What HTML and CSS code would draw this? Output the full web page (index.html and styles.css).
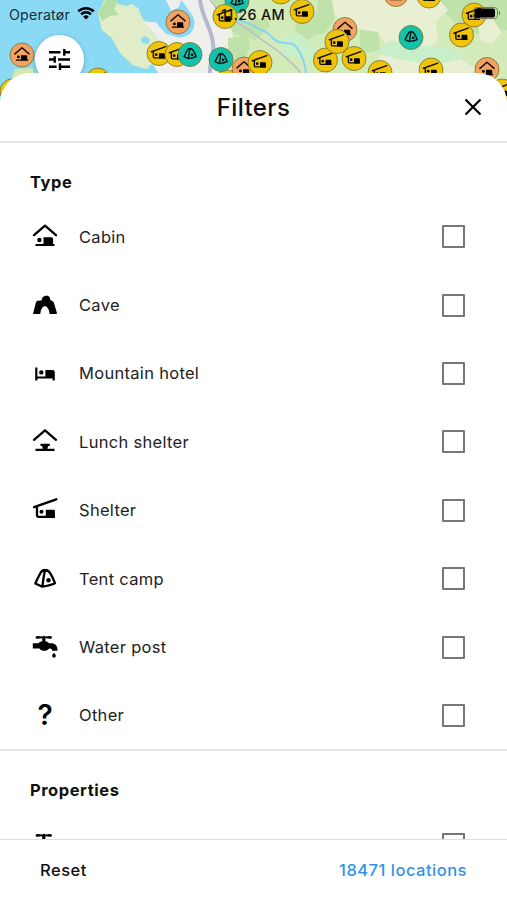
FILE: index.html
```
<!DOCTYPE html>
<html lang="en">
<head>
<meta charset="utf-8">
<title>Filters</title>
<link rel="stylesheet" href="styles.css">
</head>
<body>
<svg class="sprite" aria-hidden="true">
  <symbol id="cabin" viewBox="0 0 28 28"><path class="line" d="M3 12.2 14 2.7 25 12.2"/><circle cx="8.4" cy="17" r="2.2"/><path d="M12.5 14.3h8a1.6 1.6 0 0 1 1.6 1.6V21h1.4v2.1h-19V21h8z"/></symbol>
  <symbol id="cave" viewBox="0 0 28 28"><path d="M2 22.8 5 11.200l1.200-1.500 4.200-.2 1.200-3.200L14 4.800h2.800l1.800 1.200.9 3 3.200 2L26 22.200l-.6.8h-6.700l-.9-4-1.800-3-2.200-.9-2 1-1.800 3L9.200 23H2.600z"/></symbol>
  <symbol id="hotel" viewBox="0 0 28 28"><path d="M4.200 8.500h2.200v9h8v-6.600h7a2.400 2.400 0 0 1 2.400 2.400v8.200h-2.200v-1.900H6.400v1.900H4.200z"/><circle cx="10.3" cy="13.4" r="2.2"/></symbol>
  <symbol id="lunch" viewBox="0 0 28 28"><path class="line" d="M3 11.8 14 2.3 25 11.8"/><path d="M9.500 15.700h9.300v2.300h-1.600l-.8 2.700h7.100v2.200h-19v-2.200h7.400l-.8-2.700H9.500z"/></symbol>
  <symbol id="shelter" viewBox="0 0 28 28"><path class="line" d="M3 11.200 25.300 3.300M6 11v8.200a1.600 1.600 0 0 0 1.600 1.600H23"/><circle cx="10.5" cy="15.8" r="2"/><path d="M14.800 13.700h7.700a1.400 1.400 0 0 1 1.400 1.400v6.700h-9.100z"/></symbol>
  <symbol id="tent" viewBox="0 0 28 28"><path class="line" d="M14 5c-2.200 0-4 1.600-5.200 4.200C7 12.500 5.800 15 4.300 18.500l7 3.200c4-.7 8.500-1.500 12.700-3.500-1.500-4-3-7-4.800-10C18 6 16 5 14 5zm0 0c-1 5-2 10-2.500 16.400"/><circle cx="17.500" cy="15.300" r="2.200"/></symbol>
  <symbol id="tap" viewBox="0 0 28 28"><path d="M5.200 3.400c1.600-1 4 .2 6.200.1a1.700 1.700 0 0 1 2.800 0c2.200.1 4.600-1.100 6.200-.1a1.300 1.300 0 0 1 0 2.200c-1.600.6-4-.3-6-.3v2.900c1.700.4 2.800 1 3.500 2h2.600c3.300 0 5.900 2.200 5.900 5.800v1.800h-5.200c0-1.700-1.200-2.600-3-2.300-1.300 1.500-3 2.300-5 2.300-2.200 0-3.700-.8-4.800-2.300H1.800V10.200h5.700c.8-1 1.900-1.600 3.700-2V5.300c-2 0-4.400.9-6 .3a1.300 1.300 0 0 1 0-2.200z"/><path d="M23 19.800c1.300 1.600 1.800 2.300 1.800 3.200a1.800 1.800 0 0 1-3.600 0c0-.9.600-1.600 1.800-3.200z"/></symbol>
  <g id="m-cabin"><circle r="12" class="orange"/><use href="#cabin" x="-9" y="-9" width="18" height="18"/></g>
  <g id="m-shelter"><circle r="12" class="yellow"/><use href="#shelter" x="-9.500" y="-9" width="18" height="18"/></g>
  <g id="m-tent"><circle r="12" class="teal"/><use href="#tent" x="-8.500" y="-9" width="17" height="17"/></g>
</svg>
<div class="screen">
  <svg class="map" viewBox="0 0 507 110">
    <rect width="507" height="110" fill="#d3eab9"/>
    <path fill="#efefeb" d="M150 0h62l8 22 12 8 2 22-4 22 6 36h-86z"/>
    <path fill="#bfe2ab" d="M212 0h22l10 22 22-4 4 8-14 14-22-6zM228 38l20-2 2 12-8 16-14-4zM302 16l18-4v20l-12 8-14-10zM318 0h16v20l-10 14h-8zM360 22l18 6 2 22-20 4zM430 0h77v30l-30 4-20-10z"/>
    <path fill="#e8efd2" d="M332 0h108l8 10-12 12 2 18-16 14h-30l-14-22-30-4-14-14zM478 22l14-4 10 14-10 12-12-4zM378 56l20-5 20 12 40-6 18 12-20 14h-70z"/>
    <path fill="#c8efc9" d="M276 40l24-6 20 20-6 8-28-6zM390 40l36 6 30 4 8 8-24 6-40-4-24-8z"/>
    <path fill="#8adaf6" d="M0 0h104l-6 13 4 17 10 8 8 15 13 12 15 4 4-6 7 11v36H0zM128 0h53l5 6 6 10 2 10-4 7-12 4-12-3-8-9-14-5-6-10z"/>
    <path fill="#efefeb" d="M166 0h15l-2 7-8 4zM142 22l14 0 10 16-4 8-12-14z"/>
    <circle cx="180" cy="23" r="14.500" fill="#8adaf6"/>
    <path fill="#e1edc8" d="M98 13l10-13h18l12 8 5 13 13 14 8 12-12 6-3 13-4 3-12-4-13-12-8-15-10-8z"/>
    <path fill="#b5dfa6" d="M98 13l8-13h13l-5 9 5 6-9 1-8 5z"/>
    <path fill="#8adaf6" d="M117 0h15l3 3-9 3-8-2zM141 38l5-2 4 4-2 4-6-1z"/>
    <path fill="#d4e7ad" d="M15 69l18-1v14H10z"/>
    <path class="road" d="M200 0c2 17 11 27 13 43 2 13-4 19-3 31"/>
    <path class="trail" d="M210 0c12 18 28 21 43 33s30 19 49 41"/>
    <path class="river" d="M238 20c11 2 18 8 26 11s7 9 15 11 13-1 18 6 8 14 9 25"/>
    <use href="#m-shelter" x="12" y="91"/><use href="#m-cabin" x="22" y="55"/>
    <use href="#m-shelter" x="98" y="80"/><use href="#m-shelter" x="159" y="53.500"/>
    <use href="#m-shelter" x="177" y="54.500"/><use href="#m-tent" x="190" y="54.500"/>
    <use href="#m-cabin" x="178" y="22"/><use href="#m-shelter" x="227" y="82"/>
    <use href="#m-tent" x="237" y="1"/><use href="#m-shelter" x="225" y="16.500"/>
    <use href="#m-tent" x="221" y="59.500"/><use href="#m-cabin" x="244" y="69"/>
    <use href="#m-shelter" x="260" y="62.500"/><use href="#m-shelter" x="281" y="-8"/>
    <use href="#m-shelter" x="302" y="11.500"/><use href="#m-cabin" x="345" y="29.500"/>
    <use href="#m-shelter" x="325.500" y="60"/><use href="#m-shelter" x="337" y="41.500"/>
    <use href="#m-shelter" x="354" y="58.500"/><use href="#m-shelter" x="380" y="72.500"/>
    <use href="#m-cabin" x="396" y="-5.500"/><use href="#m-shelter" x="429" y="-4"/>
    <use href="#m-tent" x="411" y="37.500"/><use href="#m-shelter" x="431" y="70"/>
    <use href="#m-shelter" x="474" y="15"/><use href="#m-shelter" x="461.500" y="35"/>
    <use href="#m-cabin" x="487" y="69.500"/><use href="#m-shelter" x="502" y="91"/>
  </svg>
  <header class="status">
    <span class="carrier">Operatør</span>
    <svg class="wifi" viewBox="0 0 18 14"><path d="M1.200 5.300a11.200 11.200 0 0 1 15.600 0M4.100 8.300a7 7 0 0 1 9.800 0"/><path class="dot" d="M9 13.500 6.200 10.700a4 4 0 0 1 5.600 0z"/></svg>
    <time class="time">11.26 AM</time>
    <svg class="battery" viewBox="0 0 28 12"><rect x=".5" y=".5" width="24" height="11" rx="3"/><rect class="charge" x="1.500" y="1.500" width="20.500" height="9" rx="2"/><path d="M26.500 4v4"/></svg>
  </header>
  <button class="tune" aria-label="Filters"><svg viewBox="0 0 24 24"><path d="M1 4.500h12M17 4.500h6M17 1v7M1 12h6M10.500 12H23M7 8.500v7M1 19.500h8M12.500 19.500H23M12.500 16v7"/></svg></button>
  <main class="sheet">
    <div class="title"><h1>Filters</h1><button class="close" aria-label="Close"><svg viewBox="0 0 18 18"><path d="M1.500 1.500l15 15M16.500 1.500l-15 15"/></svg></button></div>
    <div class="content">
      <section>
        <h2>Type</h2>
        <ul>
          <li><svg class="icon"><use href="#cabin"/></svg><span class="label">Cabin</span><i class="box"></i></li>
          <li><svg class="icon"><use href="#cave"/></svg><span class="label">Cave</span><i class="box"></i></li>
          <li><svg class="icon"><use href="#hotel"/></svg><span class="label">Mountain hotel</span><i class="box"></i></li>
          <li><svg class="icon"><use href="#lunch"/></svg><span class="label">Lunch shelter</span><i class="box"></i></li>
          <li><svg class="icon"><use href="#shelter"/></svg><span class="label">Shelter</span><i class="box"></i></li>
          <li><svg class="icon"><use href="#tent"/></svg><span class="label">Tent camp</span><i class="box"></i></li>
          <li><svg class="icon"><use href="#tap"/></svg><span class="label">Water post</span><i class="box"></i></li>
          <li><span class="icon question">?</span><span class="label">Other</span><i class="box"></i></li>
        </ul>
      </section>
      <section>
        <h2>Properties</h2>
        <ul>
          <li><svg class="icon"><use href="#tap"/></svg><span class="label">Water</span><i class="box"></i></li>
        </ul>
      </section>
    </div>
    <footer><span class="reset">Reset</span><span class="count">18471 locations</span></footer>
  </main>
</div>
</body>
</html>
```
FILE: styles.css
```
* { box-sizing: border-box; }
body { margin: 0; font-family: Inter, "Liberation Sans", sans-serif; color: #111; }
h1, h2, ul { margin: 0; padding: 0; font-weight: inherit; }
button { border: 0; padding: 0; background: none; }
.sprite { position: absolute; width: 0; height: 0; }
.line { fill: none; stroke: currentColor; stroke-width: 2.3; stroke-linecap: round; stroke-linejoin: round; }
.screen { position: relative; width: 507px; height: 900px; overflow: hidden; display: flex; flex-direction: column; }

.map { position: absolute; top: 0; left: 0; width: 507px; height: 110px; }
.orange, .yellow, .teal { stroke: #75702f; stroke-width: .8; }
.orange { fill: #f4a261; }
.yellow { fill: #f0c408; }
.teal { fill: #12c2ad; }
.road, .trail, .river { fill: none; }
.road { stroke: #b5b9cf; stroke-width: 4; }
.trail { stroke: #bcc0c8; stroke-width: 1.6; }
.river { stroke: #86d4f2; stroke-width: 2; }

.status { position: relative; height: 28px; flex: none; display: grid; grid-template-columns: 62px 18px 1fr 28px; align-items: center; column-gap: 6px; padding: 0 6px 0 9px; font-size: 14.2px; white-space: nowrap; }
.carrier { letter-spacing: .2px; color: #14303a; }
.wifi { width: 18px; height: 14px; fill: none; stroke: #000; stroke-width: 2.5; margin-top: -3px; }
.wifi .dot { fill: #000; stroke: none; }
.time { padding-left: 120px; font-weight: 500; font-size: 14.3px; letter-spacing: .35px; }
.battery { width: 28px; height: 12px; margin-top: -2px; fill: none; stroke: #7a7a60; stroke-width: 1; }
.battery .charge { fill: #000; stroke: none; }

.tune { position: absolute; left: 35px; top: 35px; width: 49px; height: 49px; border-radius: 50%; background: #fff; box-shadow: 0 1px 5px rgba(0, 0, 0, .25); display: grid; place-items: center; }
.tune svg { width: 23px; height: 23px; fill: none; stroke: #000; stroke-width: 2.5; }

.sheet { position: relative; margin-top: 45px; flex: 1; min-height: 0; background: #fff; border-radius: 30px 30px 0 0; display: flex; flex-direction: column; overflow: hidden; }
.title { height: 70px; flex: none; border-bottom: 2px solid #e6e6e6; display: grid; grid-template-columns: 1fr auto 1fr; align-items: center; padding: 0 25px; }
.title h1 { grid-column: 2; font-size: 24px; font-weight: 500; letter-spacing: .4px; }
.close { justify-self: end; width: 18px; height: 18px; }
.close svg { display: block; width: 18px; height: 18px; fill: none; stroke: #000; stroke-width: 2.2; }

.content { flex: 1; min-height: 0; overflow: hidden; }
section + section { border-top: 2px solid #e6e6e6; }
h2 { height: 59.5px; padding: 28px 30px 0; font-size: 16.5px; font-weight: 700; line-height: 22px; letter-spacing: .55px; }
ul { list-style: none; }
li { height: 68.4px; display: flex; align-items: center; padding: 0 42px 0 31px; }
section:first-child ul { height: 546.5px; }
.icon { width: 28px; height: 28px; flex: none; fill: #000; color: #000; }
.question { font-size: 28px; line-height: 28px; font-weight: 600; text-align: center; }
.label { flex: 1; margin-left: 20px; font-size: 16.5px; line-height: 22px; letter-spacing: .3px; color: #222; }
.box { width: 23px; height: 23px; border: 2px solid #777; border-radius: 1px; }

footer { height: 61px; flex: none; border-top: 1px solid #e0e0e0; display: flex; justify-content: space-between; align-items: center; padding: 0 40px; font-size: 16.5px; font-weight: 500; letter-spacing: .5px; }
.count { color: #3094ea; }
```
